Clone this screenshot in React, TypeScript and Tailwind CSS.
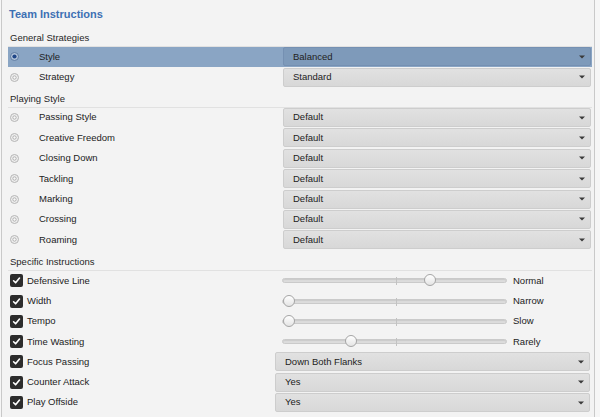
import React from "react";

const playing = [
  "Passing Style",
  "Creative Freedom",
  "Closing Down",
  "Tackling",
  "Marking",
  "Crossing",
  "Roaming",
];

const sliders = [
  { label: "Defensive Line", value: "Normal", pos: 141 },
  { label: "Width", value: "Narrow", pos: 0 },
  { label: "Tempo", value: "Slow", pos: 0 },
  { label: "Time Wasting", value: "Rarely", pos: 62 },
];

const picks = [
  { label: "Focus Passing", value: "Down Both Flanks" },
  { label: "Counter Attack", value: "Yes" },
  { label: "Play Offside", value: "Yes" },
];

function Radio({ on }: { on?: boolean }) {
  return (
    <svg width="9" height="9" viewBox="0 0 9 9" className="shrink-0">
      <circle
        cx="4.5"
        cy="4.5"
        r="4"
        fill={on ? "#b3c4da" : "#efefef"}
        stroke={on ? "#5f7ca3" : "#b4b4b4"}
        strokeWidth="1"
      />
      {on ? (
        <circle cx="4.5" cy="4.5" r="2.1" fill="#1f4687" />
      ) : (
        <circle cx="4.5" cy="4.5" r="1.7" fill="#f8f8f8" stroke="#a9a9a9" strokeWidth="0.9" />
      )}
    </svg>
  );
}

function Check() {
  return (
    <div className="flex h-[13px] w-[13px] shrink-0 items-center justify-center rounded-[2px] bg-[#2c2c2c]">
      <svg width="9" height="9" viewBox="0 0 9 9">
        <path d="M1.6 4.8 L3.6 6.8 L7.5 2" fill="none" stroke="#fff" strokeWidth="1.6" strokeLinecap="round" strokeLinejoin="round" />
      </svg>
    </div>
  );
}

function Arrow() {
  return (
    <svg width="6" height="4" viewBox="0 0 6 4" className="ml-auto mr-[5px]">
      <path d="M0 0.5 H6 L3 3.5 Z" fill="#3a3a3a" />
    </svg>
  );
}

function Select({ value, active, wide }: { value: string; active?: boolean; wide?: boolean }) {
  return (
    <div
      className={
        (wide ? "w-[315px] " : "w-[308px] ") +
        (active
          ? "bg-[#7e9aba] border-[#7590b2] "
          : "bg-gradient-to-b from-[#e1e1e1] to-[#d8d8d8] border-[#cdcdcd] ") +
        "flex h-[19px] items-center rounded-[2px] border pl-[9px] text-[9.5px] text-[#222]"
      }
    >
      <span>{value}</span>
      <Arrow />
    </div>
  );
}

function SectionHead({ title }: { title: string }) {
  return (
    <div className="flex h-[20px] items-start border-b border-[#e1e1e1] pl-[2px] pt-[4px] text-[9.5px] text-[#262626]">
      {title}
    </div>
  );
}

function Slider({ pos }: { pos: number }) {
  return (
    <div className="relative h-[5px] w-[225px] rounded-full border border-[#cacaca] bg-[#dcdcdc] shadow-[inset_0_1px_1px_rgba(0,0,0,0.08)]">
      <div className="absolute left-[113px] top-[-2px] h-[8px] w-px bg-[#c2c2c2]" />
      <div
        className="absolute top-[-5px] h-[12px] w-[12px] rounded-full border border-[#a5a5a5] bg-gradient-to-b from-[#ffffff] to-[#e4e4e4]"
        style={{ left: pos }}
      />
    </div>
  );
}

export default function App() {
  return (
    <div className="h-[417px] w-[600px] overflow-hidden bg-[#f6f6f6] font-['Liberation_Sans',Arial,sans-serif]">
      <div className="ml-[1px] h-full w-[594px] border-x border-[#c9c9c9] bg-[#f3f3f3] pl-[6px] pr-[2px]">
        <div className="flex h-[27px] items-center pl-[1px] pt-[1px] text-[11px] font-bold text-[#3d70b3]">
          Team Instructions
        </div>

        <SectionHead title="General Strategies" />
        <div className="flex h-[20.4px] items-start">
          <div className="flex h-[19.5px] w-full items-center bg-[#8aa5c4]">
            <div className="ml-[2px] flex w-[273px] items-center">
              <Radio on />
              <span className="ml-[20px] text-[9.5px] text-[#1e1e1e]">Style</span>
            </div>
            <Select value="Balanced" active />
            <div className="w-[1px]" />
          </div>
        </div>
        <div className="flex h-[20.4px] items-start">
          <div className="flex h-[19.5px] w-full items-center">
            <div className="ml-[2px] flex w-[273px] items-center">
              <Radio />
              <span className="ml-[20px] text-[9.5px] text-[#222]">Strategy</span>
            </div>
            <Select value="Standard" />
          </div>
        </div>

        <SectionHead title="Playing Style" />
        {playing.map((p) => (
          <div key={p} className="flex h-[20.4px] items-start">
            <div className="flex h-[19.5px] w-full items-center">
              <div className="ml-[2px] flex w-[273px] items-center">
                <Radio />
                <span className="ml-[20px] text-[9.5px] text-[#222]">{p}</span>
              </div>
              <Select value="Default" />
            </div>
          </div>
        ))}

        <SectionHead title="Specific Instructions" />
        {sliders.map((s) => (
          <div key={s.label} className="flex h-[20.4px] items-center">
            <div className="ml-[2px] flex w-[272px] items-center">
              <Check />
              <span className="ml-[4px] text-[9.5px] text-[#222]">{s.label}</span>
            </div>
            <Slider pos={s.pos} />
            <span className="ml-[6px] text-[9.5px] text-[#222]">{s.value}</span>
          </div>
        ))}
        {picks.map((p) => (
          <div key={p.label} className="flex h-[20.4px] items-start">
            <div className="flex h-[19.5px] w-full items-center">
              <div className="ml-[2px] flex w-[265px] items-center">
                <Check />
                <span className="ml-[4px] text-[9.5px] text-[#222]">{p.label}</span>
              </div>
              <Select value={p.value} wide />
            </div>
          </div>
        ))}
      </div>
    </div>
  );
}
